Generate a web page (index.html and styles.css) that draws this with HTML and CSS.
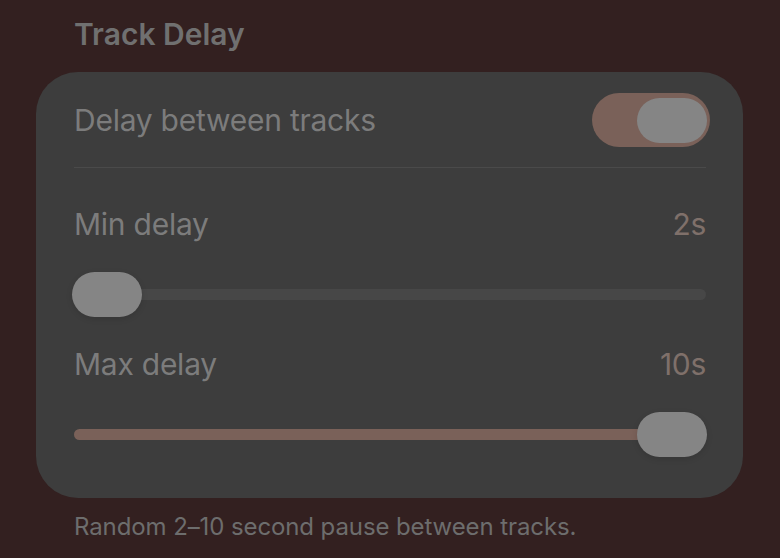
FILE: index.html
```html
<!DOCTYPE html>
<html>
<head>
<meta charset="utf-8">
<link rel="stylesheet" href="styles.css">
</head>
<body>
<div class="page">
  <h2 class="section-title">Track Delay</h2>
  <div class="card">
    <div class="row toggle-row">
      <span class="label">Delay between tracks</span>
      <div class="toggle on"><div class="toggle-knob"></div></div>
    </div>
    <div class="divider"></div>
    <div class="slider-block first">
      <div class="slider-head">
        <span class="label">Min delay</span>
        <span class="value">2s</span>
      </div>
      <div class="slider">
        <div class="track"><div class="fill" style="width:0%"></div></div>
        <div class="thumb thumb-min"></div>
      </div>
    </div>
    <div class="slider-block">
      <div class="slider-head">
        <span class="label">Max delay</span>
        <span class="value">10s</span>
      </div>
      <div class="slider">
        <div class="track"><div class="fill" style="width:100%"></div></div>
        <div class="thumb thumb-max"></div>
      </div>
    </div>
  </div>
  <p class="footnote">Random 2–10 second pause between tracks.</p>
</div>
</body>
</html>
```
FILE: styles.css
```css
html, body {
  margin: 0;
  padding: 0;
}
body {
  background: #332020;
  font-family: Inter, "Noto Sans", "Liberation Sans", sans-serif;
  width: 780px;
  height: 558px;
  overflow: hidden;
}
.page {
  padding: 0 37px 0 36px;
}
.section-title {
  margin: 0;
  padding: 16px 0 0 38px;
  height: 72px;
  box-sizing: border-box;
  font-size: 30px;
  line-height: 36px;
  font-weight: 600;
  color: #707070;
  letter-spacing: 0;
}
.card {
  background: #3d3d3d;
  border-radius: 42px;
  padding: 0 37px 41px 38px;
  width: 707px;
  box-sizing: border-box;
}
.row {
  display: flex;
  align-items: center;
  justify-content: space-between;
}
.toggle-row {
  height: 95px;
  padding-top: 1px;
  box-sizing: border-box;
}
.label {
  font-size: 30px;
  line-height: 36px;
  color: #7c7c7c;
  letter-spacing: -0.25px;
}
.value {
  font-size: 30px;
  line-height: 36px;
  color: #7f706a;
  letter-spacing: -0.3px;
}
.toggle {
  width: 118px;
  height: 54px;
  border-radius: 27px;
  background: #7a6159;
  margin-right: -4px;
  display: flex;
  align-items: center;
  justify-content: flex-end;
  padding: 0 3px;
  box-sizing: border-box;
}
.toggle-knob {
  width: 70px;
  height: 45px;
  border-radius: 23px;
  background: #858585;
}
.divider {
  height: 1px;
  background: #4a4a4a;
}
.slider-block {
  padding-top: 29px;
}
.slider-block.first {
  padding-top: 38px;
}
.slider-head {
  display: flex;
  justify-content: space-between;
  align-items: baseline;
}
.slider {
  position: relative;
  height: 45px;
  margin-top: 30px;
  display: flex;
  align-items: center;
}
.track {
  flex: 1;
  height: 11px;
  border-radius: 6px;
  background: #474747;
  overflow: hidden;
}
.fill {
  height: 100%;
  background: #7a6159;
}
.thumb {
  position: absolute;
  top: 0;
  width: 70px;
  height: 45px;
  border-radius: 23px;
  background: #858585;
  box-shadow: 0 2px 6px rgba(0,0,0,0.12);
}
.thumb-min {
  left: -2px;
}
.thumb-max {
  right: -1px;
}
.footnote {
  margin: 0;
  padding: 14px 0 0 38px;
  font-size: 24px;
  line-height: 30px;
  color: #6d6d6d;
  letter-spacing: -0.1px;
}
```
